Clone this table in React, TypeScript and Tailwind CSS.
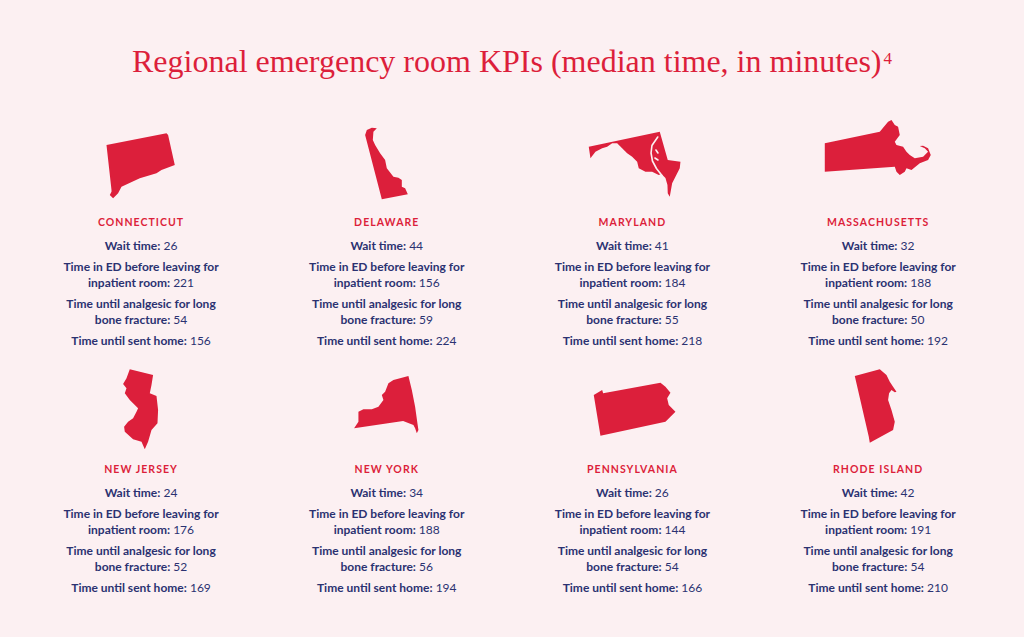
import React from "react";

const RED = "#dc1f3b";
const BG = "#fcf0f2";

type State = {
  name: string;
  wait: number;
  ed: number;
  analgesic: number;
  home: number;
  paths: string[];
  gaps?: string[];
};

const row1: State[] = [
  {
    name: "CONNECTICUT",
    wait: 26,
    ed: 221,
    analgesic: 54,
    home: 156,
    paths: [
      "M106.7 145 L166.7 133.3 L168.3 135 L175 165 L161.7 170 L156.7 173.3 L140 178.3 L121.7 186.7 L118.3 193.3 L113.3 198.3 L110 195 L111.7 191.7 L111.7 190 Z",
    ],
  },
  {
    name: "DELAWARE",
    wait: 44,
    ed: 156,
    analgesic: 59,
    home: 224,
    paths: [
      "M365 135 L366.7 130 L371.7 127.7 L376.7 128.3 L373.3 131.7 L372.7 140 L375 145 L380 153.3 L385 160 L386.7 168.3 L393.3 176.7 L398.3 177.7 L401.7 180 L401.7 186.7 L405 188.3 L407.7 194.3 L381.7 199.3 Z",
    ],
  },
  {
    name: "MARYLAND",
    wait: 41,
    ed: 184,
    analgesic: 55,
    home: 218,
    paths: [
      "M588.3 146.7 L659.3 131.7 L667.3 160 L680 161.7 L679.3 168.3 L675 176.7 L671.7 183.3 L669.3 196.7 L667.3 193.3 L667 185 L665 178 L661 174 L658.3 175 L651.7 171.7 L645 171.7 L638.3 168.3 L636.7 161.7 L631.7 156.7 L626.7 153.3 L621.7 148.3 L616.7 143.3 L611.7 143.3 L606.7 146.7 L601.7 148.3 L595 151.7 L590 158.3 Z",
    ],
    gaps: [
      "M657.3 137 L651.5 145.5 L650.6 153 L652 161 L656 168.5 L661.5 175.5",
      "M655.5 150 L657.5 153 M654.5 158 L657.5 160",
    ],
  },
  {
    name: "MASSACHUSETTS",
    wait: 32,
    ed: 188,
    analgesic: 50,
    home: 192,
    paths: [
      "M825 143.3 L880 131.7 L888.3 121.7 L891.7 120 L895 125 L898.3 126.7 L900 135 L895 141.7 L896.7 145 L903.3 146.7 L906.7 151.7 L910 155 L915 158.3 L923.3 156.7 L928.3 151.7 L925 148.3 L920 146 L923.3 145.7 L928.3 148.3 L931 155 L928.3 160 L920 163.3 L911.7 170 L906.7 168.3 L905 171.7 L900 175 L896.7 171.7 L895 166.7 L825 171.7 Z",
    ],
  },
];

const row2: State[] = [
  {
    name: "NEW JERSEY",
    wait: 24,
    ed: 176,
    analgesic: 52,
    home: 169,
    paths: [
      "M130 369.3 L153.3 375 L151.7 385 L150 393.3 L156.7 396 L158.3 410 L157.7 423.3 L151.7 430 L148.3 441.7 L145 449.3 L141.7 441.7 L133.3 439.3 L125 431.7 L124.3 426.7 L128.3 421.7 L133.3 418.3 L136.7 411.7 L138.3 408.3 L130 400 L125 393.3 L126.7 388.3 L123.3 384 L126.7 378.3 Z",
    ],
  },
  {
    name: "NEW YORK",
    wait: 34,
    ed: 188,
    analgesic: 56,
    home: 194,
    paths: [
      "M354 428.3 L358.3 421.7 L358.3 411.7 L363.3 409.3 L371.7 409.3 L378.3 406.7 L383.3 400 L381.7 395 L385 391.7 L388.3 383.3 L393.3 380 L408.3 376 L411.7 390 L415 406.7 L417.3 423.3 L418.3 430 L416.7 433.3 L415 428.3 L413.3 425 L403 421 Z",
    ],
  },
  {
    name: "PENNSYLVANIA",
    wait: 26,
    ed: 144,
    analgesic: 54,
    home: 166,
    paths: [
      "M593.3 395 L601.7 390 L602.7 393.3 L660 382.7 L665 386.7 L670 392.7 L666.7 398.3 L668.3 405 L675 411.7 L670 416.7 L665 421.7 L600 435.7 Z",
    ],
  },
  {
    name: "RHODE ISLAND",
    wait: 42,
    ed: 191,
    analgesic: 54,
    home: 210,
    paths: [
      "M855 376 L880 369.3 L886.7 375 L890 381.7 L893.3 386.7 L896.7 391.7 L895 392.3 L891.7 390 L889.3 393.3 L888.3 400 L891.7 410 L895 421.7 L893.3 430 L870 442.7 L869 436.7 Z",
    ],
  },
];

const COL_W = 245.67;
const COL_LEFT = 18.2;

function Item({ children }: { children: React.ReactNode }) {
  return <p className="mt-[5px] leading-[16px]">{children}</p>;
}

function Cell({ s, col, top }: { s: State; col: number; top: number }) {
  const left = COL_LEFT + col * COL_W;
  return (
    <div className="flex h-[247px] flex-col items-center">
      <svg
        width={COL_W}
        height={100}
        viewBox={`${left} ${top} ${COL_W} 100`}
        className="block shrink-0"
      >
        {s.paths.map((d, i) => (
          <path key={i} d={d} fill={RED} />
        ))}
        {(s.gaps || []).map((d, i) => (
          <path
            key={`g${i}`}
            d={d}
            fill="none"
            stroke={BG}
            strokeWidth={1.6}
            strokeLinecap="round"
            strokeLinejoin="round"
          />
        ))}
      </svg>
      <div className="mt-[10px] text-[10.5px] font-bold leading-[14px] tracking-[0.1em] text-[#dc1f3b]">
        {s.name}
      </div>
      <div className="mt-[4px] text-center text-[12px] text-[#2b3271]">
        <Item>
          <span className="font-bold">Wait time:</span> {s.wait}
        </Item>
        <Item>
          <span className="font-bold">Time in ED before leaving for</span>
          <br />
          <span className="font-bold">inpatient room:</span> {s.ed}
        </Item>
        <Item>
          <span className="font-bold">Time until analgesic for long</span>
          <br />
          <span className="font-bold">bone fracture:</span> {s.analgesic}
        </Item>
        <Item>
          <span className="font-bold">Time until sent home:</span> {s.home}
        </Item>
      </div>
    </div>
  );
}

export default function App() {
  return (
    <div
      className="h-[637px] w-[1024px] overflow-hidden bg-[#fcf0f2]"
      style={{ fontFamily: "Lato, 'Noto Sans', sans-serif" }}
    >
      <h1
        className="pt-[41px] text-center text-[32px] font-normal leading-[40px] text-[#dc1f3b]"
        style={{ fontFamily: "'Liberation Serif', serif" }}
      >
        Regional emergency room KPIs (median time, in minutes)
        <sup className="ml-[2px] text-[17px]">4</sup>
      </h1>
      <div className="mt-[24px] grid grid-cols-4 pl-[18.2px] pr-[23px]">
        {row1.map((s, i) => (
          <Cell key={s.name} s={s} col={i} top={105} />
        ))}
        {row2.map((s, i) => (
          <Cell key={s.name} s={s} col={i} top={352} />
        ))}
      </div>
    </div>
  );
}
